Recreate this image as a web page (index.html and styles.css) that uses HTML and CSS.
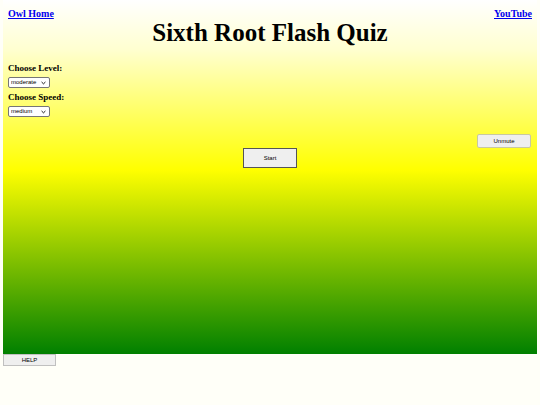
FILE: index.html
```html
<!DOCTYPE html>
<html>
<head>
<meta charset="utf-8">
<link rel="stylesheet" href="styles.css">
</head>
<body>
<div class="panel">
  <div class="topbar">
    <a class="link" href="#">Owl Home</a>
    <a class="link" href="#">YouTube</a>
  </div>
  <h1 class="title">Sixth Root Flash Quiz</h1>
  <div class="controls">
    <div class="label">Choose Level:</div>
    <select class="sel"><option>moderate</option></select>
    <div class="label">Choose Speed:</div>
    <select class="sel"><option>medium</option></select>
  </div>
  <div class="muterow"><button class="btn mute">Unmute</button></div>
  <div class="startrow"><button class="btn start">Start</button></div>
</div>
<button class="btn help">HELP</button>
</body>
</html>
```

FILE: styles.css
```css
html, body {
  margin: 0;
  padding: 0;
}
body {
  background: #fffff8;
  font-family: "Liberation Serif", "Times New Roman", serif;
  width: 540px;
  height: 405px;
  overflow: hidden;
}
.panel {
  margin: 0 3px;
  height: 354px;
  box-sizing: border-box;
  padding: 8px 5px 0 5px;
  background: linear-gradient(to bottom, #ffffff 0%, #ffffd0 14%, #ffff00 48%, #008000 100%);
}
.topbar {
  display: flex;
  justify-content: space-between;
  height: 12px;
}
.link {
  color: #0000ee;
  font-weight: bold;
  font-size: 10px;
  line-height: 12px;
  text-decoration: underline;
}
.title {
  margin: 0;
  text-align: center;
  font-size: 25px;
  line-height: 26px;
  font-weight: bold;
  color: #000;
}
.controls {
  margin-top: 17px;
}
.label {
  font-weight: bold;
  font-size: 9px;
  line-height: 11px;
  height: 11px;
}
.sel {
  -webkit-appearance: none;
  appearance: none;
  display: block;
  margin: 3px 0 4px 0;
  width: 42px;
  height: 11px;
  box-sizing: border-box;
  font-size: 6px;
  line-height: 9px;
  font-family: "Liberation Sans", Arial, sans-serif;
  color: #000;
  padding: 0 0 0 2px;
  border: 1px solid #767676;
  border-radius: 2px;
  background-color: #fff;
  background-image: url("data:image/svg+xml,%3Csvg xmlns='http://www.w3.org/2000/svg' width='6' height='4' viewBox='0 0 6 4'%3E%3Cpath d='M0.7 0.8 L3 3 L5.3 0.8' fill='none' stroke='%23000' stroke-width='1.1'/%3E%3C/svg%3E");
  background-repeat: no-repeat;
  background-position: right 3px center;
  background-size: 5px 4px;
}
.muterow {
  display: flex;
  justify-content: flex-end;
  margin-top: 17px;
  padding-right: 1px;
}
.btn {
  font-family: "Liberation Sans", Arial, sans-serif;
  font-size: 6px;
  color: #000;
  background: #efefef;
  padding: 0;
}
.mute {
  width: 54px;
  height: 14px;
  border: 1px solid #c8c8a0;
  border-radius: 2px;
}
.startrow {
  display: flex;
  justify-content: center;
}
.start {
  width: 54px;
  height: 20px;
  border: 1px solid #555;
  border-radius: 0;
}
.help {
  display: block;
  margin-left: 3px;
  width: 53px;
  height: 12px;
  border: 1px solid #c0c0c0;
  border-radius: 0;
}
```
